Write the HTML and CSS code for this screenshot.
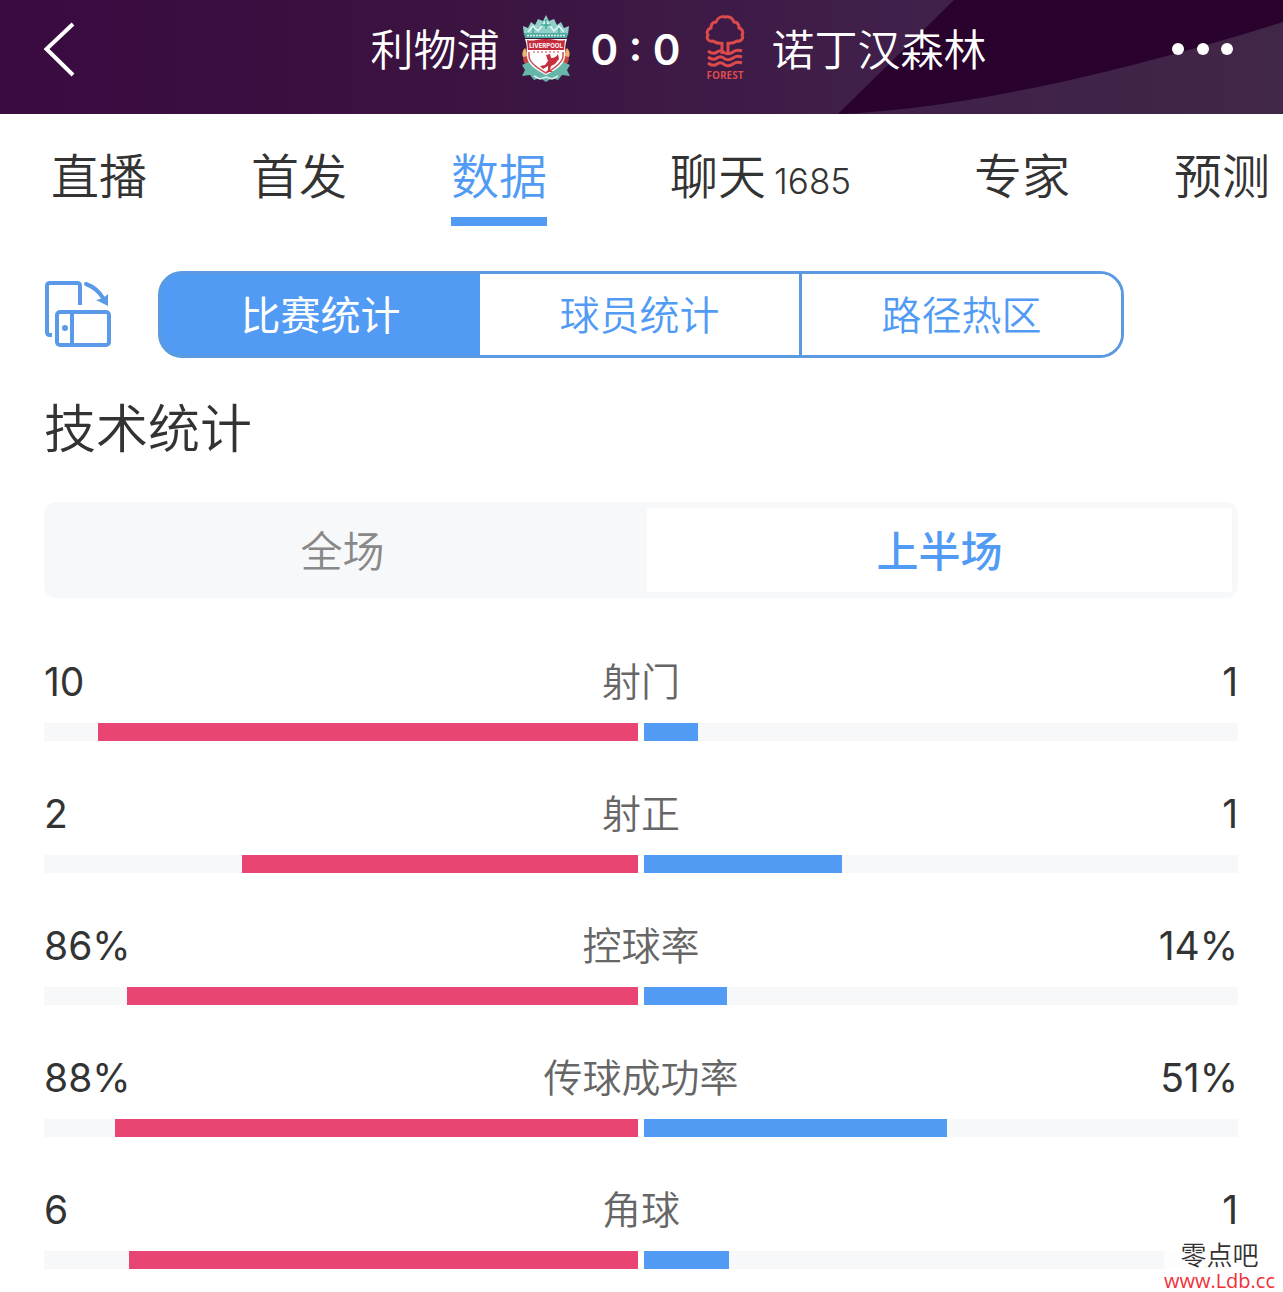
FILE: index.html
```html
<!DOCTYPE html>
<html lang="zh-CN">
<head>
    <meta charset="UTF-8">
    <meta name="viewport" content="width=device-width, initial-scale=1">
    <title>利物浦 0 : 0 诺丁汉森林</title>
    <link rel="stylesheet" href="styles.css">
</head>
<body>
    <div class="page">
        <header class="header">
            <svg class="header_bg" viewBox="0 0 1283 114" preserveAspectRatio="none" aria-hidden="true">
                <defs>
                    <linearGradient id="bg" x1="0" x2="1" y1="0" y2="0">
                        <stop offset="0" stop-color="#3a0a41"/>
                        <stop offset="0.35" stop-color="#3b1340"/>
                        <stop offset="0.7" stop-color="#40204a"/>
                        <stop offset="1" stop-color="#412747"/>
                    </linearGradient>
                </defs>
                <rect width="1283" height="114" fill="url(#bg)"/>
                <path d="M954 0H1283V22Q1010 107 838 114Z" fill="#29032e"/>
            </svg>
            <div class="side">
                <button class="back" type="button" aria-label="返回">
                    <svg width="40" height="56" viewBox="0 0 40 56"><path d="M36 3 9.500 28 36 54" fill="none" stroke="#fff" stroke-width="4"/></svg>
                </button>
                <span>利物浦</span>
            </div>
            <div class="score">
                <svg width="50" height="68" viewBox="0 0 50 68" aria-hidden="true">
                    <path d="M3 20 2 11l5 2 3-6 4 3 3-6 5 2 3-6 3 6 5-2 3 6 4-3 3 6 5-2-1 9Z" fill="#8fd0c8"/>
                    <path d="M7 17l5-6 5 5 8-10 8 10 5-5 5 6" fill="none" stroke="#e8f7f5" stroke-width="1.500"/>
                    <path d="M25 4v10M20 10h10M12 13v5M38 13v5" stroke="#4aa79d" stroke-width="1.500"/>
                    <path d="M3 18h44l-1 5H4Z" fill="#55aaa0"/>
                    <path d="M6 20.500h38" stroke="#d7efec" stroke-width="1.500" stroke-dasharray="2 1"/>
                    <path d="M6 52q-6-7-3-16l2-3 3 6v13ZM44 52q6-7 3-16l-2-3-3 6v13Z" fill="#c4473e"/>
                    <path d="M2 42q-2-5 2-9l3 8ZM48 42q2-5-2-9l-3 8Z" fill="#efb272"/>
                    <path d="M1 50l9-4 9 10 6 3 6-3 9-10 9 4-3 5 3 6-8-1-4 5-6-2-6 4-6-4-6 2-4-5-8 1 3-6Z" fill="#67b6aa"/>
                    <path d="M4 24h42c-2 5-2 10-2 17 0 8-9 14-19 19C15 55 6 49 6 41c0-7 0-12-2-17Z" fill="#fff"/>
                    <path d="M6 25q4 1 9 0t10-1q5 0 10 1t9 0l-1 10H7Z" fill="#c42c3c"/>
                    <path d="M8 37v4c0 6 8 12 17 17 9-5 17-11 17-17v-4" fill="none" stroke="#c84e58" stroke-width="1.500"/>
                    <path d="M12 37h26" stroke="#c84e58" stroke-dasharray="2 2"/>
                    <text x="25" y="33" class="crest_text">LIVERPOOL</text>
                    <path d="M25 40l4-1 1 4c4 0 6-2 7-4l1 5-4 5-4 2-1 4 3 2h-7l2-2v-4l-5 3-3-3 5-1 3-4Z" fill="#c5303d"/>
                    <path d="M13 61l6 3 6-2 6 2 6-3" fill="none" stroke="#d7efec" stroke-width="1.500"/>
                </svg>
                <strong class="result">0 : 0</strong>
                <svg width="50" height="68" viewBox="0 0 50 68" fill="none" stroke="#dc4a4c" aria-hidden="true">
                    <path d="M22 28c-5 1-7-1-9-2-5 1-7-3-5-6-2-3 0-6 3-7 0-4 2-6 5-6 2-5 6-6 9-5 4-1 8 1 9 5 4 0 5 3 5 6 3 1 5 4 3 7 2 3-1 7-5 6-3 2-6 3-10 2" stroke-width="3"/>
                    <path d="M22 27v12M28 27v12" stroke-width="3"/>
                    <path d="M8 36q5 4 9 1t8 1q4 2 8-1t9-1M8 42q5 4 9 1t8 1q4 2 8-1t9-1M8 48q5 4 9 1t8 1q4 2 8-1t9-1" stroke-width="3"/>
                    <text x="25" y="64" class="forest_text">FOREST</text>
                </svg>
            </div>
            <div class="side">
                <span>诺丁汉森林</span>
                <button class="more" type="button" aria-label="更多">
                    <svg width="62" height="14" viewBox="0 0 62 14" fill="#fff"><circle cx="6" cy="7" r="6"/><circle cx="31" cy="7" r="6"/><circle cx="55" cy="7" r="6"/></svg>
                </button>
            </div>
        </header>

        <nav class="tabs">
            <a href="#live">直播</a>
            <a href="#lineup">首发</a>
            <a href="#data" class="active">数据</a>
            <a href="#chat" class="chat">聊天<small>1685</small></a>
            <a href="#expert">专家</a>
            <a href="#predict">预测</a>
        </nav>

        <div class="views">
            <button class="rotate" type="button" aria-label="横屏">
                <svg width="68" height="68" viewBox="0 0 68 68" fill="none" stroke="#5b9ae8" stroke-width="4">
                    <path d="M8 54H6q-3 0-3-3V5q0-3 3-3h27q3 0 3 3v19"/>
                    <rect x="13" y="31" width="52" height="33" rx="3"/>
                    <path d="M28 31v33"/>
                    <path d="M42 3q11 4 17 14" stroke-linecap="round"/>
                    <path d="M64 13v12l-12-6q7-1 12-6Z" fill="#5b9ae8" stroke="none"/>
                    <circle cx="21" cy="47" r="3" fill="#5b9ae8" stroke="none"/>
                </svg>
            </button>
            <div class="segment">
                <button class="active" type="button">比赛统计</button>
                <button type="button">球员统计</button>
                <button type="button">路径热区</button>
            </div>
        </div>

        <main class="stats">
            <h1>技术统计</h1>
            <div class="period">
                <button type="button">全场</button>
                <button class="active" type="button">上半场</button>
            </div>
            <div class="list" id="list"></div>
        </main>

        <div class="watermark">
            <span>零点吧</span>
            <span class="url">www.Ldb.cc</span>
        </div>
    </div>
    <script src="script.js"></script>
</body>
</html>
```

FILE: styles.css
```css
* {
    box-sizing: border-box;
}
body {
    margin: 0;
    background-color: #fff;
    color: #333;
    font-family: Inter, "Noto Sans CJK SC", sans-serif;
    font-weight: 350;
}
button {
    padding: 0;
    border: 0;
    background: none;
    color: inherit;
    font: inherit;
    cursor: pointer;
}
svg {
    display: block;
}
.page {
    position: relative;
    overflow: hidden;
}

/* header */
.header {
    position: relative;
    display: grid;
    grid-template-columns: 1fr auto 1fr;
    align-items: center;
    gap: 21px;
    height: 114px;
    padding: 0 49px 16px 37px;
    color: #fff;
    font-size: 43px;
    white-space: nowrap;
}
.header_bg {
    position: absolute;
    left: 0;
    top: 0;
    width: 100%;
    height: 100%;
    z-index: -1;
}
.side {
    display: flex;
    align-items: center;
    justify-content: space-between;
}
.side span {
    padding-bottom: 4px;
}
.score {
    display: flex;
    align-items: center;
    gap: 20px;
}
.result {
    font-size: 42px;
    font-weight: 600;
}
.crest_text {
    fill: #fff;
    font-size: 6px;
    font-weight: 700;
    text-anchor: middle;
}
.forest_text {
    fill: #dc4a4c;
    stroke: none;
    font-family: "Open Sans", sans-serif;
    font-size: 10px;
    font-weight: 700;
    text-anchor: middle;
}

/* main tabs */
.tabs {
    display: flex;
    gap: 104px;
    padding: 27px 0 0 51px;
    font-size: 48px;
    line-height: 72px;
    white-space: nowrap;
}
.tabs a {
    flex: none;
    height: 85px;
    color: #333;
    text-decoration: none;
}
.tabs .active {
    border-bottom: 9px solid #529bf5;
    color: #529bf5;
}
.tabs .chat {
    padding: 0 19px;
}
.tabs small {
    margin-left: 8px;
    font-size: 35px;
}

/* view switch */
.views {
    display: flex;
    align-items: center;
    gap: 46px;
    padding: 45px 159px 0 44px;
}
.segment {
    display: flex;
    flex: 1;
    height: 87px;
    border: 3px solid #5b9ae0;
    border-radius: 24px;
    overflow: hidden;
    background: linear-gradient(to right, #529bf5 50%, #fff 50%);
    color: #529bf5;
    font-size: 40px;
}
.segment button {
    flex: 1;
    padding-bottom: 4px;
    background-color: #fff;
}
.segment button + button + button {
    border-left: 3px solid #5b9ae0;
}
.segment .active {
    background-color: #529bf5;
    color: #fff;
    font-weight: 400;
}

/* stats */
.stats {
    padding: 34px 45px 23px 44px;
}
.stats h1 {
    margin: 0;
    font-size: 52px;
    font-weight: 350;
    line-height: 76px;
}
.period {
    display: flex;
    gap: 12px;
    height: 96px;
    margin-top: 34px;
    padding: 6px;
    border-radius: 12px;
    background-color: #f7f8fa;
    color: #888;
    font-size: 42px;
}
.period button {
    flex: 1;
    padding-bottom: 4px;
}
.period .active {
    background-color: #fff;
    color: #529bf5;
    font-weight: 500;
}
.list {
    display: grid;
    gap: 43px;
    margin-top: 54px;
}
.line {
    display: grid;
    grid-template-columns: 1fr auto 1fr;
    margin-bottom: 11px;
    font-size: 39px;
    font-weight: 400;
    line-height: 60px;
}
.name {
    color: #666;
    font-weight: 350;
}
.away {
    text-align: right;
}
.bars {
    display: grid;
    grid-template-columns: 1fr 1fr;
    gap: 6px;
}
.bar {
    display: flex;
    height: 18px;
    background-color: #f7f8fa;
}
.bar_home {
    justify-content: flex-end;
}
.bar_home i {
    background-color: #e84573;
}
.bar_away i {
    background-color: #529bf5;
}

.watermark {
    position: absolute;
    right: 8px;
    bottom: 0;
    display: flex;
    flex-direction: column;
    align-items: center;
    background-color: rgba(255, 255, 255, 0.7);
    font-size: 26px;
    line-height: 28px;
}
.url {
    color: #f03038;
    font-family: "Open Sans", sans-serif;
    font-size: 20px;
    font-weight: 500;
    line-height: 22px;
}
```

FILE: script.js
```js
(function () {
    var stats = [
        {name: "射门", home: 10, away: 1},
        {name: "射正", home: 2, away: 1},
        {name: "控球率", home: 86, away: 14, percent: true},
        {name: "传球成功率", home: 88, away: 51, percent: true},
        {name: "角球", home: 6, away: 1}
    ];
    var html = "";
    stats.forEach(function (s) {
        // percentages fill the bar directly, counts are shares of both teams
        var total = s.percent ? 100 : s.home + s.away;
        var unit = s.percent ? "%" : "";
        html += '<div class="row">' +
            '<div class="line">' +
            '<span>' + s.home + unit + '</span>' +
            '<span class="name">' + s.name + '</span>' +
            '<span class="away">' + s.away + unit + '</span>' +
            '</div>' +
            '<div class="bars">' +
            '<div class="bar bar_home"><i style="width:' + s.home / total * 100 + '%"></i></div>' +
            '<div class="bar bar_away"><i style="width:' + s.away / total * 100 + '%"></i></div>' +
            '</div></div>';
    });
    document.getElementById("list").innerHTML = html;
})();
```
